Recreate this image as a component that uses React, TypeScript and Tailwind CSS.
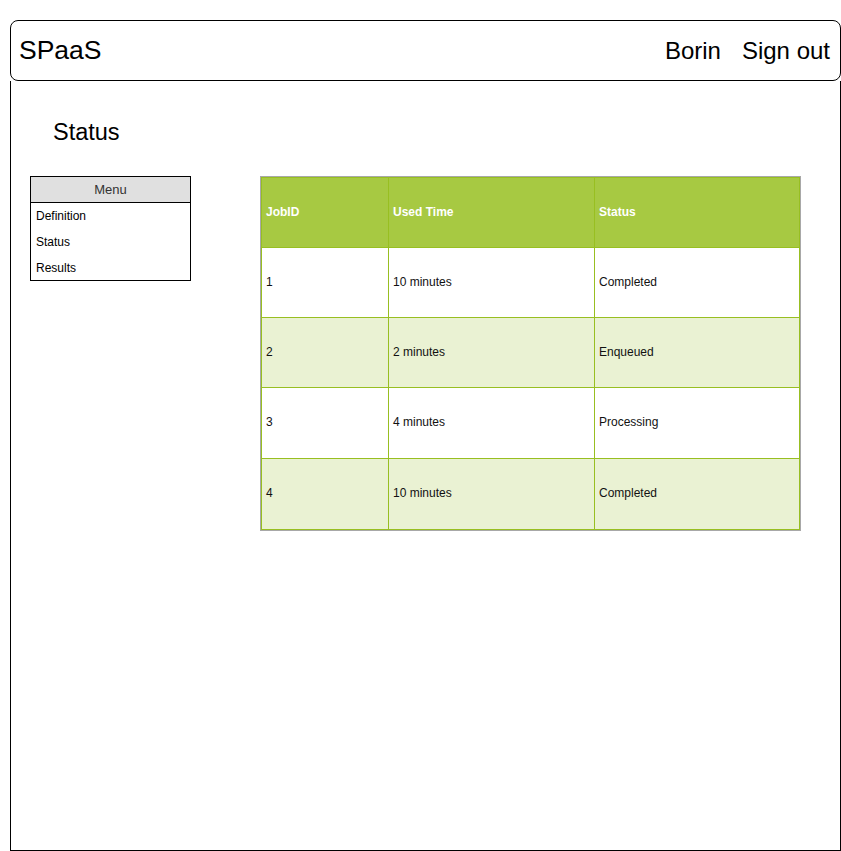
import React from "react";

const jobs = [
  { id: "1", time: "10 minutes", status: "Completed" },
  { id: "2", time: "2 minutes", status: "Enqueued" },
  { id: "3", time: "4 minutes", status: "Processing" },
  { id: "4", time: "10 minutes", status: "Completed" },
];

const menuItems = ["Definition", "Status", "Results"];

export default function App() {
  return (
    <div
      className="w-[841px] h-[851px] bg-white text-black"
      style={{ fontFamily: '"Liberation Sans", Arial, sans-serif' }}
    >
      <div className="pt-[20px] pl-[10px]">
        {/* header bar */}
        <div className="w-[831px] h-[61px] border border-black rounded-[8px] flex items-center justify-between pl-[8px] pr-[10px]">
          <span className="text-[26.5px] leading-none">SPaaS</span>
          <div className="flex items-center gap-[21px] text-[24px] leading-none">
            <span>Borin</span>
            <span>Sign out</span>
          </div>
        </div>

        {/* page body */}
        <div className="w-[831px] h-[770px] border-x border-b border-black">
          <h1 className="pl-[42px] pt-[37px] text-[23.5px] leading-[28px] font-normal">
            Status
          </h1>

          <div className="flex items-start mt-[30px] pl-[19px]">
            <div className="w-[161px] border border-black">
              <div className="h-[26px] bg-[#e0e0e0] border-b border-black flex items-center justify-center text-[13px] text-[#333]">
                Menu
              </div>
              <ul>
                {menuItems.map((item) => (
                  <li
                    key={item}
                    className="h-[26px] flex items-center pl-[5px] text-[12px] last:h-[25px]"
                  >
                    {item}
                  </li>
                ))}
              </ul>
            </div>

            <div className="ml-[69px] border border-[#a8a8a8]">
              <table className="w-[539px] border-collapse text-[12px]">
                <thead>
                  <tr className="bg-[#a7c942] text-white h-[70px]">
                    <th className="w-[127px] border border-[#98bf21] text-left font-bold px-[4px] pb-[2px]">
                      JobID
                    </th>
                    <th className="w-[206px] border border-[#98bf21] text-left font-bold px-[4px] pb-[2px]">
                      Used Time
                    </th>
                    <th className="border border-[#98bf21] text-left font-bold px-[4px] pb-[2px]">
                      Status
                    </th>
                  </tr>
                </thead>
                <tbody>
                  {jobs.map((job, i) => (
                    <tr
                      key={job.id}
                      className={`text-[#111] ${i < 2 ? "h-[70px]" : "h-[71px]"} ${i % 2 === 1 ? "bg-[#eaf2d3]" : "bg-white"}`}
                    >
                      <td className="border border-[#98bf21] px-[4px] pb-[2px]">{job.id}</td>
                      <td className="border border-[#98bf21] px-[4px] pb-[2px]">{job.time}</td>
                      <td className="border border-[#98bf21] px-[4px] pb-[2px]">{job.status}</td>
                    </tr>
                  ))}
                </tbody>
              </table>
            </div>
          </div>
        </div>
      </div>
    </div>
  );
}
